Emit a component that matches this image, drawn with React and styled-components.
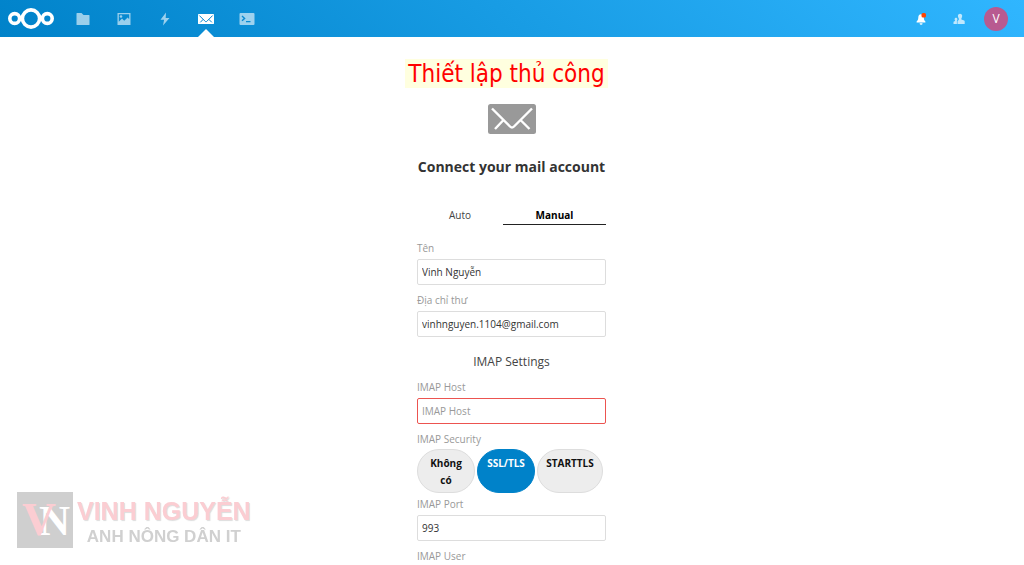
import React, { useState } from "react";
import styled, { createGlobalStyle, css } from "styled-components";

const GlobalStyle = createGlobalStyle`
  * { box-sizing: border-box; }
  body {
    margin: 0;
    background: #fff;
    color: #222;
    font-family: "Open Sans", "Noto Sans", sans-serif;
    font-size: 10px;
  }
`;

const Page = styled.div`
  display: flex;
  flex-direction: column;
  height: 100vh;
  overflow: hidden;
`;

const Header = styled.header`
  display: flex;
  flex: none;
  align-items: center;
  height: 37px;
  padding: 0 16px 0 8px;
  background: linear-gradient(40deg, #0082c9 0%, #30b6ff 100%);
`;

const HomeLink = styled.a`
  display: flex;
  margin-right: 8px;
`;

const AppNav = styled.nav`
  display: flex;
  flex: 1;
`;

const AppLink = styled.a`
  position: relative;
  display: flex;
  align-items: center;
  justify-content: center;
  width: 41px;
  height: 37px;
  color: #fff;

  svg { opacity: ${(p) => (p.$active ? 1 : 0.6)}; }

  ${(p) => p.$active && css`
    &::after {
      content: "";
      position: absolute;
      bottom: 0;
      left: 50%;
      margin-left: -8px;
      border: 8px solid transparent;
      border-top-width: 0;
      border-bottom-color: #fff;
    }
  `}
`;

const Tools = styled.div`
  display: flex;
  align-items: center;
  gap: 13px;
`;

const ToolButton = styled.button`
  display: flex;
  align-items: center;
  justify-content: center;
  width: 24px;
  height: 24px;
  padding: 0;
  border: 0;
  background: none;
  color: #fff;
`;

const Avatar = styled(ToolButton)`
  border-radius: 50%;
  background: #b85a90;
  font: 12px "Open Sans", sans-serif;
`;

const Main = styled.main`
  display: flex;
  flex-direction: column;
  align-items: center;
  padding: 22px 1px 0 0;
`;

const Note = styled.div`
  margin-right: 10px;
  padding: 1px 3px 0;
  background: #ffffdf;
  color: #f00;
  font: 24px/28px "DejaVu Sans Condensed", "DejaVu Sans", sans-serif;
  font-stretch: condensed;
  white-space: nowrap;
`;

const MailMark = styled.div`
  display: flex;
  margin-top: 16px;
  color: #999;
`;

const Heading = styled.h2`
  margin: 22px 0 0;
  color: #333;
  font-size: 14px;
  line-height: 22px;
  white-space: nowrap;
`;

const Form = styled.form`
  width: 189px;
  margin-top: 28px;
`;

const Tabs = styled.div`
  display: grid;
  grid-template-columns: 5fr 6fr;
  margin-bottom: 15px;
`;

const Tab = styled.button`
  height: 19px;
  padding: 0;
  border: 0;
  border-bottom: 1px solid ${(p) => (p.$active ? "#222" : "transparent")};
  background: none;
  color: ${(p) => (p.$active ? "#000" : "#444")};
  font: ${(p) => (p.$active ? 700 : 400)} 10px/18px "Open Sans", sans-serif;
`;

const FieldLabel = styled.label`
  display: block;
  margin-bottom: 3px;
  color: #999;
  line-height: 16px;
`;

const TextInput = styled.input`
  display: block;
  width: 100%;
  height: 26px;
  margin-bottom: 7px;
  padding: 0 4px;
  border: 1px solid ${(p) => (p.$invalid ? "#ec5450" : "#ddd")};
  border-radius: 2px;
  background: #fff;
  color: #333;
  font: 10px "Open Sans", sans-serif;
  outline: 0;

  &::placeholder { color: #999; opacity: 1; }
`;

const SectionTitle = styled.h3`
  margin: 15px 0 7px;
  color: #444;
  font-size: 12px;
  font-weight: 400;
  line-height: 20px;
  text-align: center;
`;

const SecurityGroup = styled.fieldset`
  min-width: 0;
  margin: 0 0 3px;
  padding: 0;
  border: 0;
`;

const Legend = styled.legend`
  margin-bottom: 2px;
  padding: 0;
  color: #999;
  line-height: 16px;
`;

const Choices = styled.div`
  display: flex;
  gap: 2px;
`;

const Choice = styled.label`
  width: ${(p) => (p.$wide ? 66 : 58)}px;
  height: 44px;
  padding: 5px 8px;
  border: 1px solid #ddd;
  border-radius: 22px;
  background: #ededed;
  color: #111;
  font-weight: 700;
  line-height: 17px;
  text-align: center;

  &:has(input:checked) {
    border-color: #0082c9;
    background: #0082c9;
    color: #fff;
  }
`;

const HiddenRadio = styled.input`
  position: absolute;
  opacity: 0;
  pointer-events: none;
`;

const Watermark = styled.aside`
  position: fixed;
  bottom: 17px;
  left: 17px;
  display: flex;
  gap: 4px;
  font-family: "Liberation Sans", sans-serif;
  font-weight: 700;
  white-space: nowrap;
`;

const WatermarkText = styled.div`
  display: flex;
  flex-direction: column;
  align-items: center;
  padding-top: 4px;
`;

const Brand = styled.div`
  color: #fbcdd2;
  font-size: 25px;
  line-height: 30px;
  text-shadow: 1px 1px 1px #ddd;
`;

const Slogan = styled.div`
  color: #d0d0d0;
  font-size: 17px;
  line-height: 21px;
`;

const Logo = () => (
  <svg width="46" height="22" viewBox="0 0 46 22" fill="none" stroke="#fff" strokeWidth="3.6">
    <circle cx="23" cy="10.5" r="8.6" />
    <circle cx="6.7" cy="10.5" r="4.9" />
    <circle cx="39.3" cy="10.5" r="4.9" />
  </svg>
);

const FolderIcon = () => (
  <svg width="16" height="16" viewBox="0 0 16 16" fill="currentColor">
    <path d="M1.5 2.5A.5.5 0 0 1 2 2h4.500l2 2H14a.5.5 0 0 1 .5.5v9a.5.5 0 0 1-.5.5H2a.5.5 0 0 1-.5-.5z" />
  </svg>
);

const ImageIcon = () => (
  <svg width="16" height="16" viewBox="0 0 16 16" fill="currentColor">
    <path fillRule="evenodd" d="M1.500 2h13v12h-13zM2.800 3.300v7.400L6 7.600l2.200 2.200 3.500-3.300 1.500 1.700V3.300z" />
    <circle cx="5" cy="5.500" r="1.300" />
  </svg>
);

const BoltIcon = () => (
  <svg width="16" height="16" viewBox="0 0 16 16" fill="currentColor">
    <path d="M9 1.500 3.500 8.700h3.600L6 14.500l6.500-7.600H8.700z" />
  </svg>
);

const MailIcon = ({ width = 16, height = 10, line = "#0785cf", weight = 3 }) => (
  <svg width={width} height={height} viewBox="0 0 48 30">
    <rect width="48" height="30" rx="2.5" fill="currentColor" />
    <path d="M4 4.500 22 22.500q2 2 4 0L44 4.500M15.500 16 7 25M32.500 16l9 9" fill="none" stroke={line} strokeWidth={weight} />
  </svg>
);

const TerminalIcon = () => (
  <svg width="16" height="12" viewBox="0 0 16 12">
    <rect x=".5" width="15" height="12" rx="1" fill="currentColor" />
    <path d="m3 3 2.600 2.400L3 7.800M7 8.600h4.500" fill="none" stroke="#0b87d0" strokeWidth="1.4" />
  </svg>
);

const BellIcon = () => (
  <svg width="12" height="12" viewBox="0 0 12 12">
    <path fill="currentColor" d="M5 1.200c-2 .2-2.600 1.600-2.700 3.300C2.200 6.700 1.600 7.500.6 8.400v1.200h8.800V8.400c-1-.9-1.500-1.700-1.600-3.900C7.700 2.600 7 1.200 5 1.200zM3.600 10.200h3a1.500 1.500 0 0 1-3 0z" />
    <rect x="5.500" y="0" width="4.500" height="4.500" rx="1.500" fill="#ff4402" />
  </svg>
);

const ContactsIcon = () => (
  <svg width="12" height="12" viewBox="0 0 12 12" fill="currentColor" opacity=".7">
    <path d="M7 .8c1.400 0 2.200.9 2.200 2.300 0 1-.4 1.800-.8 2.300v1l2.800 1.100q.5.300.5 1V11H4.500V8.600q0-.7.500-1l.8-.5V5.400C5.300 4.900 4.900 4.100 4.900 3.100 4.900 1.700 5.600.8 7 .8z" />
    <path d="M3 4.700c.9 0 1.400.6 1.400 1.500 0 .6-.2 1-.5 1.400V11H.5V9.200q0-.4.400-.6l1.200-.5v-.5c-.3-.4-.5-.8-.5-1.400 0-.9.5-1.500 1.400-1.500z" />
  </svg>
);

const Monogram = () => (
  <svg width="56" height="56" viewBox="0 0 56 56" fontFamily="Liberation Serif, serif" fontWeight="700">
    <rect width="56" height="56" fill="#cfcfcf" />
    <text x="22" y="43" fontSize="43" fill="#fff">N</text>
    <text x="5" y="43" fontSize="47" fill="#fbcdd2">V</text>
  </svg>
);

const apps = [
  ["Files", FolderIcon],
  ["Photos", ImageIcon],
  ["Activity", BoltIcon],
  ["Mail", MailIcon],
  ["Terminal", TerminalIcon],
];

const securityModes = ["Không có", "SSL/TLS", "STARTTLS"];

function Field({ id, label, ...input }) {
  return (
    <>
      <FieldLabel htmlFor={id}>{label}</FieldLabel>
      <TextInput id={id} {...input} />
    </>
  );
}

export default function App() {
  const [security, setSecurity] = useState("SSL/TLS");
  const [tab, setTab] = useState("Manual");

  return (
    <Page>
      <GlobalStyle />
      <Header>
        <HomeLink href="#" aria-label="Nextcloud"><Logo /></HomeLink>
        <AppNav>
          {apps.map(([name, Icon]) => (
            <AppLink key={name} href="#" aria-label={name} $active={name === "Mail"}><Icon /></AppLink>
          ))}
        </AppNav>
        <Tools>
          <ToolButton aria-label="Notifications"><BellIcon /></ToolButton>
          <ToolButton aria-label="Contacts"><ContactsIcon /></ToolButton>
          <Avatar>V</Avatar>
        </Tools>
      </Header>
      <Main>
        <Note>Thiết lập thủ công</Note>
        <MailMark><MailIcon width={48} height={30} line="#fff" weight={2.4} /></MailMark>
        <Heading>Connect your mail account</Heading>
        <Form>
          <Tabs>
            {["Auto", "Manual"].map((name) => (
              <Tab key={name} type="button" $active={tab === name} onClick={() => setTab(name)}>{name}</Tab>
            ))}
          </Tabs>
          <Field id="name" label="Tên" defaultValue="Vinh Nguyễn" />
          <Field id="email" label="Địa chỉ thư" type="email" defaultValue="vinhnguyen.1104@gmail.com" />
          <SectionTitle>IMAP Settings</SectionTitle>
          <Field id="imap-host" label="IMAP Host" placeholder="IMAP Host" $invalid />
          <SecurityGroup>
            <Legend>IMAP Security</Legend>
            <Choices>
              {securityModes.map((mode) => (
                <Choice key={mode} $wide={mode === "STARTTLS"}>
                  <HiddenRadio type="radio" name="security" checked={security === mode} onChange={() => setSecurity(mode)} />
                  {mode}
                </Choice>
              ))}
            </Choices>
          </SecurityGroup>
          <Field id="imap-port" label="IMAP Port" defaultValue="993" />
          <Field id="imap-user" label="IMAP User" />
        </Form>
      </Main>
      <Watermark>
        <Monogram />
        <WatermarkText>
          <Brand>VINH NGUYỄN</Brand>
          <Slogan>ANH NÔNG DÂN IT</Slogan>
        </WatermarkText>
      </Watermark>
    </Page>
  );
}
